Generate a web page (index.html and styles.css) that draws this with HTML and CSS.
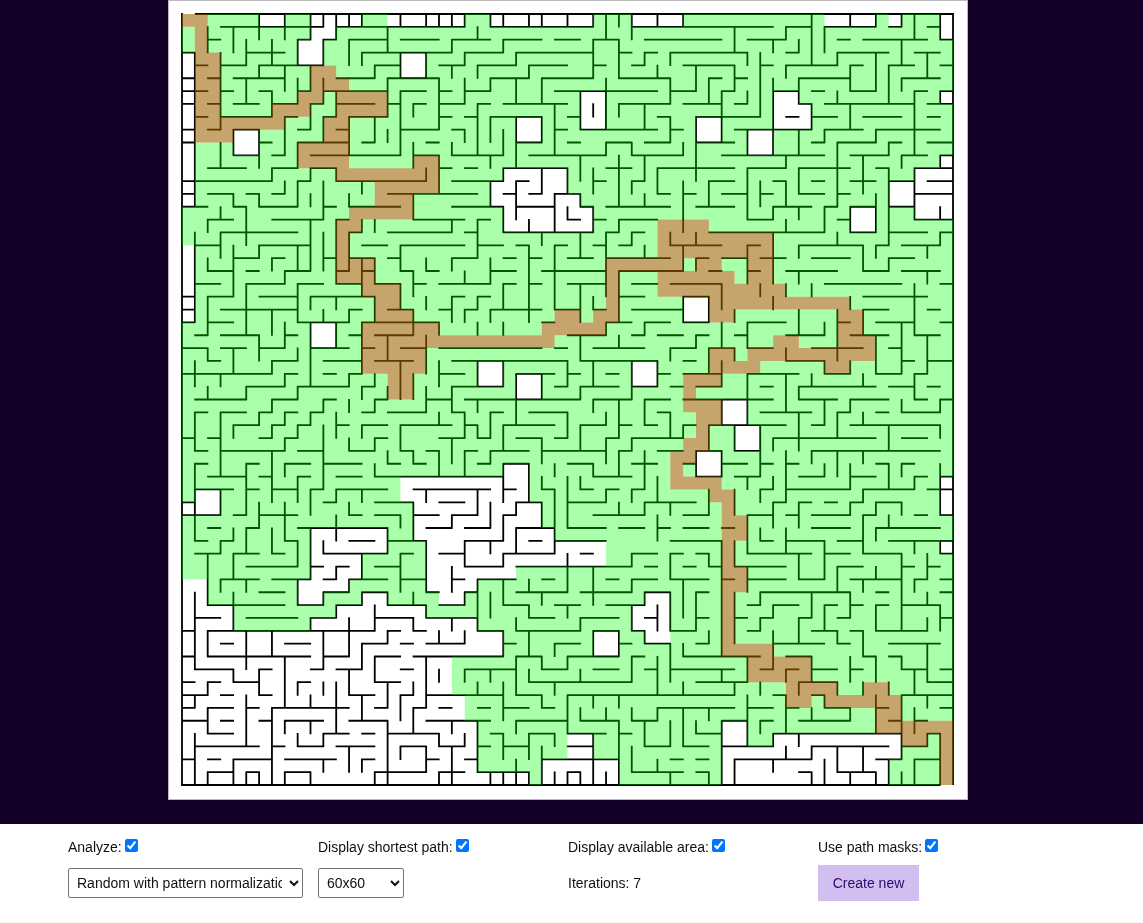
FILE: index.html
```html
<!DOCTYPE html>
<html lang="en">
<head>
<meta charset="utf-8">
<title>Maze</title>
<link rel="stylesheet" href="styles.css">
</head>
<body>
<main class="stage">
  <canvas id="maze" class="maze" width="800" height="800"></canvas>
</main>
<section class="controls">
  <label class="field">Analyze:<input type="checkbox" checked></label>
  <label class="field">Display shortest path:<input type="checkbox" checked></label>
  <label class="field">Display available area:<input type="checkbox" checked></label>
  <label class="field">Use path masks:<input type="checkbox" checked></label>
  <select class="picker picker-wide">
    <option>Random with pattern normalization</option>
  </select>
  <select class="picker picker-size">
    <option>60x60</option>
  </select>
  <div class="field">Iterations: 7</div>
  <div><button class="create" type="button">Create new</button></div>
</section>
<script src="maze.js"></script>
</body>
</html>
```
FILE: styles.css
```css
html, body {
  margin: 0;
  background: #fff;
}
body {
  font-family: "Liberation Sans", Arial, sans-serif;
  font-size: 14px;
  color: #111;
  overflow: hidden;
}
.stage {
  display: flex;
  justify-content: center;
  height: 824px;
  padding-right: 7px;
  box-sizing: border-box;
  background: #15002a;
}
.maze {
  display: block;
  width: 800px;
  height: 800px;
  outline: 1px solid #bbb;
  outline-offset: -1px;
}
.controls {
  display: grid;
  grid-template-columns: repeat(4, 250px);
  grid-template-rows: 41px 36px;
  align-items: center;
  width: 1000px;
  margin-left: 68px;
}
.field {
  line-height: 16px;
}
.field input {
  margin: 4px 3px 2px 3px;
}
.picker {
  height: 30px;
  padding: 0 4px;
  font: 14px "Liberation Sans", Arial, sans-serif;
  color: #111;
  background: #fff;
  border: 1px solid #767676;
  border-radius: 2px;
  box-sizing: border-box;
}
.picker-wide { width: 235px; }
.picker-size { width: 86px; }
.create {
  display: block;
  width: 101px;
  height: 36px;
  padding: 0;
  font: 14px "Liberation Sans", Arial, sans-serif;
  color: #2b0a6e;
  background: #d3bfef;
  border: 0;
}
```
FILE: maze.js
```js
var H = {
1:"3-11 12-22 24-32 35-46 47-49 50-54 55-56 58-59",
2:"2-3 9-10 11-12 13-16 17-20 21-24 25-28 29-31 32-34 36-42 44-47 51-52 53-58 59-60",
3:"0-1 5-8 14-21 22-25 26-32 34-35 36-37 38-44 47-48 51-55 57-59",
4:"1-2 3-5 6-11 15-17 20-22 23-26 27-30 32-33 35-36 39-43 45-46 47-51 52-53 55-57 59-60",
5:"0-1 2-3 4-8 12-15 16-20 24-27 28-32 34-38 41-42 43-44 48-52 56-59",
6:"0-2 3-4 6-7 9-10 11-16 17-19 20-21 22-24 29-37 38-40 42-43 46-48 49-50 52-54 57-58 59-60",
7:"0-1 2-3 4-6 7-9 10-11 12-15 16-17 18-19 20-22 23-24 25-30 34-38 39-42 43-44 48-49 50-57 58-60",
8:"1-2 3-7 8-9 11-12 13-16 20-21 22-23 24-28 30-31 37-38 40-45 47-48 49-51 53-56 58-59",
9:"0-1 2-3 4-6 9-10 12-13 17-20 21-22 29-30 31-37 38-39 43-49 50-53 54-59",
10:"0-1 6-7 9-13 14-15 19-20 26-28 30-31 33-35 36-38 40-43 49-50 51-54 55-56 58-60",
11:"4-6 7-8 10-17 18-20 21-25 27-33 35-39 42-50 52-55 56-58 59-60",
12:"2-5 7-9 10-12 20-21 22-23 25-30 33-35 37-43 44-47 48-52 54-55 57-60",
13:"0-7 9-10 12-19 21-25 26-27 32-33 35-36 41-43 46-47 49-50 52-54 55-57 58-60",
14:"0-1 2-4 5-6 7-8 16-23 25-26 27-28 29-31 37-38 39-40 42-44 45-46 48-50 51-52 57-60",
15:"0-2 4-5 6-9 11-12 13-17 21-25 26-29 31-32 33-38 40-43 46-49 50-51 52-54 55-57",
16:"2-4 7-11 12-13 18-22 23-24 30-31 32-33 34-37 44-46 51-52 57-60",
17:"3-9 13-14 16-21 22-23 25-32 33-34 35-36 41-50 52-54 55-58 59-60",
18:"1-3 6-10 14-16 17-22 23-25 26-27 29-30 32-33 34-35 38-42 44-45 48-53 54-55 56-59",
19:"4-6 7-8 11-12 13-15 16-17 21-23 25-26 27-28 30-32 33-38 40-41 42-44 45-47 49-52 55-57",
20:"2-4 5-6 8-10 12-13 14-15 17-18 19-20 24-26 28-33 34-39 41-42 44-45 47-51 53-55 56-59",
21:"1-3 5-8 9-11 12-14 15-17 18-19 20-24 25-26 27-28 30-33 35-37 38-42 50-56 59-60",
22:"0-1 2-4 6-9 10-15 21-22 23-24 34-36 39-41 53-58",
23:"0-1 3-9 13-14 16-18 20-21 22-23 24-28 29-31 32-33 35-39 53-55 58-59",
24:"0-1 2-4 9-13 14-20 28-29 33-35 36-38 39-41 44-47 51-52 54-57 59-60",
25:"1-2 3-6 8-9 13-14 15-18 30-33 35-36 37-39 40-41 43-44 47-50 52-55 57-59",
26:"0-2 3-5 6-8 10-13 14-15 17-19 20-28 29-30 32-36 38-40 41-43 44-46 49-53 55-56",
27:"2-3 7-9 11-14 15-18 21-30 31-37 39-40 47-50 56-57 58-60",
28:"0-7 8-9 11-12 13-14 20-22 26-29 30-31 33-34 37-38 39-42 44-48 50-52 54-56 57-58",
29:"5-8 9-13 14-15 21-25 29-30 31-34 35-37 38-39 40-42 45-46 48-54 55-57 58-59",
30:"1-5 7-9 11-12 15-16 19-21 22-31 32-35 36-38 39-46 48-51 52-55 57-58 59-60",
31:"1-2 3-5 6-7 8-9 10-11 14-15 16-19 21-22 24-25 27-30 37-38 45-49 51-52 54-55 56-59",
32:"4-6 7-8 9-10 12-13 14-16 17-21 22-23 25-29 31-33 34-35 36-37 39-40 41-47 49-50 52-59",
33:"0-1 2-3 6-7 8-9 15-16 20-22 23-24 26-28 29-30 33-34 35-39 46-54 56-58",
34:"1-2 3-8 9-11 13-15 17-18 19-20 22-23 24-27 28-33 34-35 37-39 40-42 43-45 49-59",
35:"1-2 5-6 8-10 11-14 16-17 18-19 23-24 25-27 30-32 35-37 39-40 42-44 45-46 47-48 54-55 56-57",
36:"2-5 6-7 9-10 12-14 15-25 32-35 40-42 43-45 48-50 52-54 57-58 59-60",
37:"1-4 5-6 7-9 10-11 12-16 18-24 25-26 28-29 31-32 33-34 35-36 45-46 47-52 53-57 58-60",
38:"0-1 11-12 15-18 20-22 26-28 30-33 36-40 46-47 48-49 50-51 52-53 54-56",
39:"0-3 4-5 6-9 13-14 15-17 18-20 21-23 25-26 32-36 39-41 44-46 47-48 49-52 53-54 57-58 59-60",
40:"2-3 5-6 9-16 19-21 22-24 26-29 30-33 34-36 37-38 39-41 42-43 49-52 54-59",
41:"1-2 3-4 8-9 13-15 16-19 22-25 27-28 29-33 38-42 45-46 47-50 51-53 55-60",
42:"1-3 4-6 7-8 11-16 17-18 20-22 25-29 31-32 35-37 38-39 40-41 44-49 50-52 53-56 59-60",
43:"5-9 10-11 12-13 15-17 22-25 26-35 36-37 39-40 41-42 43-47 51-53 56-57 58-59",
44:"3-6 7-10 11-12 13-16 17-19 21-22 23-26 28-29 33-34 35-37 38-41 42-43 44-47 48-50 52-56 57-58 59-60",
45:"6-8 11-13 14-16 19-20 22-23 26-30 31-35 36-38 40-41 45-52 54-55 59-60",
46:"2-8 9-11 12-14 16-19 20-22 25-27 29-31 33-36 44-45 46-48 50-51 52-53 54-55 56-59",
47:"1-3 5-9 10-12 15-18 19-23 27-29 31-34 36-37 40-41 43-44 45-46 48-49 51-52 59-60",
48:"0-1 2-15 16-17 18-19 23-25 26-31 32-34 35-36 38-40 44-45 49-51 52-53 54-58",
49:"3-4 8-10 14-16 17-18 19-22 25-26 29-31 34-35 36-38 40-41 46-50 51-52 55-59",
50:"0-1 2-10 11-13 15-17 18-25 26-28 30-34 35-36 39-45 47-49 53-54 55-56",
51:"1-4 6-7 10-11 12-14 17-18 22-26 28-30 32-34 36-37 38-43 45-46 47-48 49-51 52-53 56-58 59-60",
52:"0-1 2-3 4-6 9-10 15-17 27-35 40-44 48-51 58-60",
53:"0-2 3-4 6-7 13-15 17-18 19-25 26-28 30-43 46-47 49-50 56-60",
54:"0-1 2-4 5-6 7-13 15-16 18-19 20-21 23-24 25-27 28-29 37-43 44-46 47-48 50-52 54-55 59-60",
55:"0-2 3-4 6-7 8-11 13-16 19-24 26-30 31-34 35-37 42-44 45-46 48-52 55-56 57-58",
56:"2-4 11-13 14-15 16-20 24-25 27-29 30-33 34-35 40-42 46-56 58-59",
57:"1-6 7-8 9-11 12-15 17-19 20-22 23-24 25-27 30-32 36-38 39-41 42-46 49-55 56-58",
58:"0-1 2-3 4-7 8-12 14-15 19-20 22-23 28-34 38-39 40-41 43-49 54-56 57-59",
59:"2-4 5-6 8-10 15-19 20-22 23-27 30-31 35-39 40-41 48-49 51-54"
};
var V = {
1:"3-15 17-24 27-29 31-34 35-41 45-51 53-54 56-60",
2:"1-3 16-17 19-20 22-25 26-27 29-30 42-46 48-50 52-53 54-56 59-60",
3:"3-9 10-12 15-16 17-19 28-29 31-36 37-39 41-42 44-45",
4:"1-3 9-11 14-15 18-22 26-28 32-33 40-41 42-44 45-48 51-52 58-60",
5:"2-4 5-7 15-18 21-25 29-30 35-39 40-42 44-45 48-51 53-57 59-60",
6:"0-2 4-5 9-12 14-15 18-19 25-27 31-32 38-40 51-53 59-60",
7:"2-4 6-8 12-13 19-20 23-25 27-28 30-31 32-33 34-38 40-42 48-50 54-60",
8:"0-2 4-6 8-11 13-14 20-21 24-26 28-29 31-32 33-34 35-36 38-41 50-54 55-56 59-60",
9:"2-4 5-7 10-12 13-15 18-20 21-24 26-27 29-30 32-33 36-38 41-43 44-46 52-53 56-57",
10:"0-2 4-6 7-9 12-13 14-15 16-20 22-23 24-29 31-32 37-39 40-44 47-48 53-54 55-56 59-60",
11:"0-1 2-4 5-7 8-10 13-16 17-20 23-24 30-31 32-37 41-42 45-46 48-51 52-53 56-57 58-59",
12:"0-2 6-8 12-13 16-21 22-23 24-26 31-33 37-38 39-41 43-44 46-47 52-56",
13:"0-1 2-4 8-11 14-15 17-20 23-24 28-29 30-31 33-34 38-39 44-45 47-50 51-53 57-59",
14:"0-1 3-4 13-14 16-17 19-22 24-28 29-30 32-33 37-38 42-44 45-46 49-51 53-55 58-59",
15:"4-5 8-10 16-17 19-21 22-24 28-29 30-31 33-34 35-36 46-48 50-52 59-60",
16:"1-3 5-8 9-10 25-27 29-30 34-35 40-42 45-46 48-49 52-54 55-60",
17:"0-1 3-5 6-11 18-20 21-23 27-30 32-34 39-40 42-45 53-55 57-58",
18:"7-8 10-12 14-16 20-22 23-25 28-30 34-35 38-41 45-46 47-48 52-53 54-56",
19:"0-1 3-5 12-13 19-20 22-23 25-28 29-31 37-38 41-45 46-47 50-54 57-59",
20:"0-1 5-9 11-14 24-25 27-29 31-32 34-36 48-49 51-52 56-57 59-60",
21:"0-1 2-3 4-5 10-11 16-17 19-20 22-24 29-31 33-35 39-40 43-45 47-48 55-56 57-60",
22:"0-1 3-4 5-7 9-10 20-21 23-24 31-33 34-36 41-43 45-46 48-49 51-52 56-57",
23:"1-2 4-5 7-11 16-19 22-23 24-25 27-29 30-31 32-33 37-39 44-48 52-53 55-59",
24:"0-1 5-6 8-10 11-12 13-15 19-21 23-24 31-33 34-35 38-40 41-42 45-47 51-52 59-60",
25:"0-1 2-3 9-11 12-13 15-17 21-23 24-25 27-29 32-34 35-38 39-41 42-43 44-46 48-50 52-55 56-58 59-60",
26:"3-4 5-7 8-12 13-16 28-32 38-39 40-42 47-48 50-53 55-56 58-60",
27:"0-1 4-5 16-17 18-24 35-38 44-45 46-47 48-50 51-52 56-58 59-60",
28:"0-1 5-7 8-10 12-14 17-18 28-30 33-35 36-37 38-40 45-46 50-51 53-54 57-60",
29:"7-11 14-17 18-23 35-36 37-42 49-50 52-53 56-57 59-60",
30:"0-1 12-14 15-16 27-29 31-33 36-40 42-45 46-47 50-51 53-56 59-60",
31:"6-9 11-13 14-15 17-19 21-24 25-27 29-30 32-34 36-37 47-48 51-52 54-55 59-60",
32:"0-1 2-5 7-8 12-14 15-17 22-23 27-29 30-31 35-36 43-46 48-50 53-54 56-60",
33:"0-2 5-9 10-11 17-22 24-25 31-32 33-35 37-38 54-55 59-60",
34:"0-1 2-5 7-8 11-15 16-17 20-24 25-26 30-33 34-36 38-39 48-50 53-54 55-60",
35:"0-2 10-11 13-14 17-18 27-30 33-34 37-38 42-43 44-45 46-48 50-52 54-55 57-59",
36:"3-4 7-9 11-13 14-15 18-19 24-25 30-32 34-37 38-39 45-46 48-49 55-57",
37:"0-1 4-5 12-14 27-29 36-38 39-41 46-48 50-53 54-55 58-59",
38:"3-4 5-7 8-10 17-18 26-27 31-33 38-39 42-44 45-48 49-52 55-57 59-60",
39:"0-1 10-11 13-17 18-20 22-24 32-33 44-47 49-50 52-53 54-57",
40:"4-6 8-13 17-18 19-20 25-26 34-36 45-48 55-56",
41:"5-7 13-15 22-24 26-28 32-34 37-39 42-43 48-49 54-55 59-60",
42:"6-10 21-23 24-26 27-29 30-32 34-36 41-50 51-52 55-60",
43:"1-3 4-6 23-24 26-27 32-34 37-39 41-43 45-49 52-53 58-60",
44:"3-4 6-7 9-11 12-16 18-21 24-26 28-32 36-37 39-42 43-45 50-52 53-57",
45:"3-8 13-15 21-22 32-36 37-38 40-41 45-46 47-48 52-53 55-56",
46:"2-3 5-11 15-16 17-21 22-23 33-34 36-37 38-40 46-47 48-51 56-57 58-59",
47:"1-2 4-5 11-12 13-15 16-17 21-22 26-27 28-31 34-38 40-42 51-52 53-56 57-58",
48:"2-3 5-7 9-11 12-14 15-16 18-19 20-21 23-25 29-30 31-34 38-40 42-44 47-49 52-53 56-57",
49:"0-4 7-9 21-22 28-29 34-35 45-47 50-52 54-55 57-58 59-60",
50:"1-3 9-10 15-17 24-25 27-28 30-32 35-36 41-44 46-48 53-54 58-60",
51:"3-4 6-7 10-15 17-18 23-27 31-33 34-36 43-45 48-49 52-53 57-59",
52:"0-1 4-6 7-9 15-17 22-23 27-28 30-31 35-37 38-39 45-47 50-52 54-55 59-60",
53:"11-14 18-20 23-25 28-29 31-32 34-35 37-38 39-42 44-45 48-50 52-53 57-59",
54:"0-1 3-6 9-10 14-17 18-19 25-28 38-39 40-41 43-44 46-48 50-52 53-56 59-60",
55:"4-7 10-11 12-18 19-20 32-34 35-37 39-40 52-53 58-60",
56:"0-1 2-4 5-6 11-12 24-28 30-31 35-36 38-39 42-48 50-51 53-58 59-60",
57:"0-2 6-11 12-16 21-25 28-30 36-37 41-42 44-45 51-53 54-56 58-60",
58:"3-5 18-19 20-21 25-28 42-44 45-46 47-48 49-52 53-54 56-57",
59:"0-2 6-7 11-12 15-16 17-18 30-31 32-33 35-39 41-42 46-48 56-60"
};
// row(s): column runs [start-end)
var WHITE = {
"0":"6-8 10-14 16-22 24-32 35-39 50-54 55-56 59-60",
"1":"10-12 59-60",
"2-3":"9-11",
"3-4":"17-19",
"3-14":"0-1",
"6":"46-48 59-60",
"6-8":"31-33",
"7-8":"46-49",
"8-9":"26-28 40-42",
"9-10":"4-6 44-46",
"11":"59-60",
"12":"25-30",
"13":"24-30",
"13-14":"55-57",
"14":"24-31",
"12-15":"57-60",
"15-16":"25-32 52-54",
"18-23":"0-1",
"22-23":"39-41",
"24-25":"10-12",
"27-28":"23-25 35-37",
"28-29":"26-28",
"30-31":"42-44",
"32-33":"43-45",
"34-35":"40-42",
"35":"25-27",
"36-37":"17-27 59-60",
"38":"59-60 0-1",
"37-38":"1-3",
"38-39":"18-28",
"40":"10-16 18-29",
"41":"10-16 19-33 59-60",
"42":"10-14 19-33",
"43":"10-14 19-26",
"44":"0-2 9-13 19-23",
"45":"0-2 9-11 14-16 20-22 36-38",
"46":"0-4 12-19 35-38",
"47":"0-4 10-23 35-38",
"48":"0-25 32-34 36-38",
"49":"0-25 32-34",
"50-52":"0-21",
"53-54":"0-22",
"55":"0-23 42-44",
"56":"0-23 30-32 42-44 46-56",
"57":"0-23 30-32 42-56",
"58":"0-23 28-34 42-55",
"59":"0-27 28-34 42-55"
};
var TAN = {
"0":"0-2",
"1-2":"1-2",
"3-7":"1-3",
"4":"10-12",
"5":"10-13",
"6":"9-11 12-16",
"7":"7-10 12-16",
"8":"1-8 11-13",
"9":"1-4 11-13",
"10":"9-13",
"11":"9-13 18-20",
"12":"12-20",
"13":"15-20",
"14":"15-18",
"15":"13-18",
"16":"12-14 37-41",
"17-18":"12-13 37-46",
"19":"12-15 33-39 40-42 44-46",
"20":"12-15 33-34 37-43 44-46",
"21":"14-17 33-34 37-47",
"22":"15-17 33-34 41-52",
"23":"15-18 29-31 32-34 41-43 51-53",
"24":"14-20 28-33 51-53",
"25":"14-29 46-48 51-54",
"26":"14-19 41-43 44-54",
"27":"14-19 41-45 50-52",
"28":"16-18 39-42",
"29":"16-18 39-40",
"30":"39-42",
"31":"40-42",
"32":"40-41",
"33":"39-41",
"34":"38-40",
"35":"38-39",
"36":"38-42",
"37":"41-43",
"38":"42-43",
"39-40":"42-44",
"41-42":"42-43",
"43-44":"42-44",
"45-48":"42-43",
"49":"42-46",
"50-51":"44-49",
"52":"47-51 53-55",
"53":"47-49 50-56",
"54":"54-56",
"55":"54-60",
"56":"56-58 59-60",
"57-59":"59-60"
};

var ORIGIN = 14, PITCH = 12.85, OVERRUN = 0.6;
function at(n) { return ORIGIN + n * PITCH; }
function pairs(text) {
  return text.split(" ").map(function (p) {
    return p.split("-").map(Number);
  });
}
function mark(grid, table, value) {
  Object.keys(table).forEach(function (key) {
    var r = key.split("-").map(Number);
    var last = r.length > 1 ? r[1] : r[0];
    for (var y = r[0]; y <= last; y++) {
      pairs(table[key]).forEach(function (run) {
        for (var x = run[0]; x < run[1]; x++) grid[y][x] = value;
      });
    }
  });
}
function fillCells(ctx, grid, value, color) {
  ctx.beginPath();
  for (var y = 0; y < 60; y++) {
    var x = 0;
    while (x < 60) {
      if (grid[y][x] !== value) { x++; continue; }
      var s = x;
      while (x < 60 && grid[y][x] === value) x++;
      ctx.rect(at(s), at(y), (x - s) * PITCH, PITCH);
    }
  }
  ctx.fillStyle = color;
  ctx.fill();
}
function draw() {
  var ctx = document.getElementById("maze").getContext("2d");
  var grid = [];
  for (var i = 0; i < 60; i++) grid.push(new Array(60).fill(0));
  mark(grid, WHITE, 1);
  mark(grid, TAN, 2);

  ctx.fillStyle = "#fff";
  ctx.fillRect(0, 0, 800, 800);

  ctx.beginPath();
  Object.keys(H).forEach(function (r) {
    pairs(H[r]).forEach(function (run) {
      ctx.moveTo(at(run[0]) - OVERRUN, at(+r));
      ctx.lineTo(at(run[1]) + OVERRUN, at(+r));
    });
  });
  Object.keys(V).forEach(function (c) {
    pairs(V[c]).forEach(function (run) {
      ctx.moveTo(at(+c), at(run[0]) - OVERRUN);
      ctx.lineTo(at(+c), at(run[1]) + OVERRUN);
    });
  });
  ctx.moveTo(at(1), at(0)); ctx.lineTo(at(60) + 1, at(0));
  ctx.moveTo(at(0), at(0) - 1); ctx.lineTo(at(0), at(60)); ctx.lineTo(at(59), at(60));
  ctx.moveTo(at(60), at(0)); ctx.lineTo(at(60), at(60));
  ctx.strokeStyle = "#000";
  ctx.lineWidth = 1.8;
  ctx.stroke();

  fillCells(ctx, grid, 0, "rgba(0,255,0,0.3333)");
  fillCells(ctx, grid, 2, "rgba(155,100,0,0.58)");
}
draw();
```
